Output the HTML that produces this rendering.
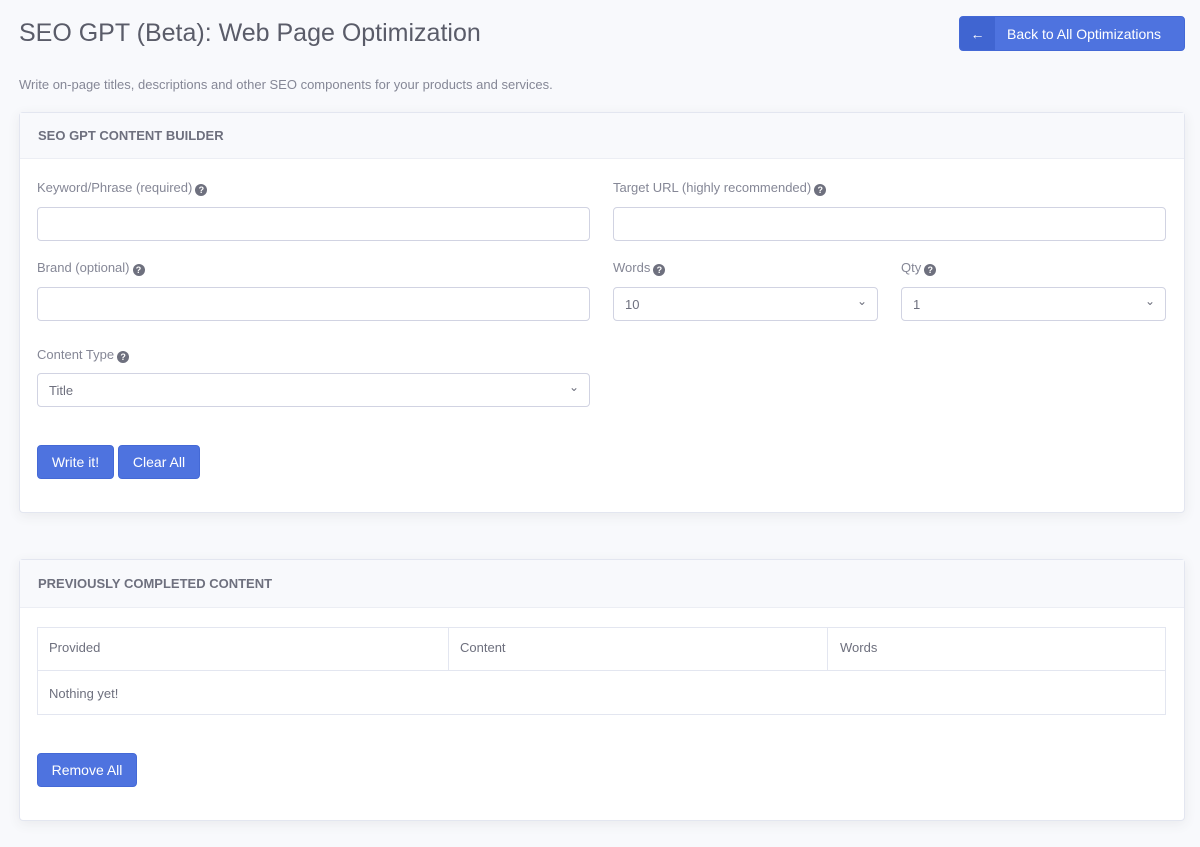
<!DOCTYPE html>
<html><head><style>
*{box-sizing:border-box;margin:0;padding:0}
body{width:1200px;height:847px;background:#f8f9fc;font-family:"Liberation Sans",sans-serif;color:#858796;position:relative;overflow:hidden}
.abs{position:absolute}
h1{position:absolute;left:19px;top:19px;font-size:25px;font-weight:400;color:#5a5c69}
.sub{left:19px;top:77px;font-size:13px}
.btn{position:absolute;background:#4e73df;color:#fff;font-size:14px;border-radius:4px;display:flex;align-items:center;justify-content:center;border:1px solid #4469d6}
.card{position:absolute;left:19px;width:1166px;background:#fff;border:1px solid #e3e6f0;border-radius:4px;box-shadow:0 3px 12px rgba(58,59,69,.08)}
.ch{height:46px;background:#f8f9fc;border-bottom:1px solid #eceef4;padding:0 18px;display:flex;align-items:center;font-size:13px;font-weight:700;color:#6e707e}
.lbl{position:absolute;font-size:13px}
.q{display:inline-block;width:12px;height:12px;border-radius:50%;background:#6e707e;color:#fff;font-size:9px;text-align:center;line-height:12px;font-weight:700;vertical-align:-1px;margin-left:3px}
.in{position:absolute;height:34px;border:1px solid #d1d3e2;border-radius:4px;background:#fff;font-size:13px;color:#6e707e;padding:0 11px;display:flex;align-items:center}
.sel::after{content:"⌄";position:absolute;right:10px;top:6px;font-size:12px;color:#6e707e}
.t{position:absolute;font-size:13px;color:#6e707e}
</style></head><body>
<h1>SEO GPT (Beta): Web Page Optimization</h1>
<div class="abs sub">Write on-page titles, descriptions and other SEO components for your products and services.</div>
<div class="btn" style="left:959px;top:16px;width:226px;height:35px;justify-content:flex-start;overflow:hidden">
<span style="width:35px;height:100%;background:#4065d1;display:flex;align-items:center;justify-content:center">←</span>
<span style="margin-left:12px">Back to All Optimizations</span></div>

<div class="card" style="top:112px;height:401px"><div class="ch">SEO GPT CONTENT BUILDER</div></div>
<div class="lbl" style="left:37px;top:180px">Keyword/Phrase (required)<span class="q">?</span></div>
<div class="lbl" style="left:613px;top:180px">Target URL (highly recommended)<span class="q">?</span></div>
<div class="in" style="left:37px;top:207px;width:553px"></div>
<div class="in" style="left:613px;top:207px;width:553px"></div>
<div class="lbl" style="left:37px;top:260px">Brand (optional)<span class="q">?</span></div>
<div class="lbl" style="left:613px;top:260px">Words<span class="q">?</span></div>
<div class="lbl" style="left:901px;top:260px">Qty<span class="q">?</span></div>
<div class="in" style="left:37px;top:287px;width:553px"></div>
<div class="in sel" style="left:613px;top:287px;width:265px">10</div>
<div class="in sel" style="left:901px;top:287px;width:265px">1</div>
<div class="lbl" style="left:37px;top:347px">Content Type<span class="q">?</span></div>
<div class="in sel" style="left:37px;top:373px;width:553px">Title</div>
<div class="btn" style="left:37px;top:445px;width:77px;height:34px">Write it!</div>
<div class="btn" style="left:118px;top:445px;width:82px;height:34px">Clear All</div>

<div class="card" style="top:559px;height:262px"><div class="ch" style="height:48px">PREVIOUSLY COMPLETED CONTENT</div></div>
<div class="abs" style="left:37px;top:627px;width:1129px;height:88px;border:1px solid #e3e6f0"></div>
<div class="abs" style="left:37px;top:670px;width:1129px;border-top:1px solid #e3e6f0"></div>
<div class="abs" style="left:448px;top:627px;height:43px;border-left:1px solid #e3e6f0"></div>
<div class="abs" style="left:827px;top:627px;height:43px;border-left:1px solid #e3e6f0"></div>
<div class="t" style="left:49px;top:640px">Provided</div>
<div class="t" style="left:460px;top:640px">Content</div>
<div class="t" style="left:840px;top:640px">Words</div>
<div class="t" style="left:49px;top:686px">Nothing yet!</div>
<div class="btn" style="left:37px;top:753px;width:100px;height:34px">Remove All</div>
</body></html>
